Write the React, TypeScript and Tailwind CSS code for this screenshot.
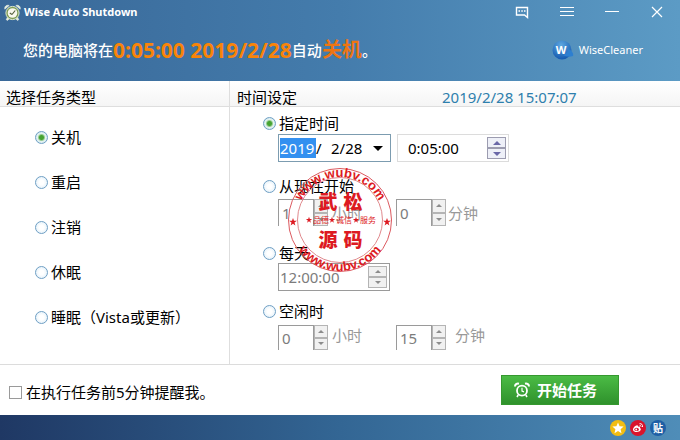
import type { ReactNode } from "react";

const line = "border-[#9a9a9a]";

function Triangle({ up, size }: { up?: boolean; size: number }) {
  return (
    <svg width={size} height={size / 2} viewBox="0 0 8 4" aria-hidden="true" fill="currentColor">
      {up ? <path d="M0 4 4 0l4 4z" /> : <path d="M0 0h8L4 4z" />}
    </svg>
  );
}

function Spinner({ name, active, className }: { name: string; active?: boolean; className: string }) {
  const tone = active
    ? "border-[#9c9cb0] bg-[#eef0f8] text-[#6a68a8]"
    : "border-[#b4b4b4] bg-[#f1f1f1] text-[#8c8c8c]";
  return (
    <span className={`flex shrink-0 flex-col ${className}`}>
      <button type="button" aria-label={`${name} +`} className={`flex flex-1 items-center justify-center border ${tone}`}>
        <Triangle up size={active ? 8 : 6} />
      </button>
      <button type="button" aria-label={`${name} -`} className={`flex flex-1 items-center justify-center border ${tone}`}>
        <Triangle size={active ? 8 : 6} />
      </button>
    </span>
  );
}

function Radio({ group, label, checked }: { group: string; label: string; checked?: boolean }) {
  return (
    <label className="flex h-5 items-center gap-[3px] whitespace-nowrap">
      <input
        type="radio"
        name={group}
        defaultChecked={checked}
        className="size-[13px] shrink-0 appearance-none rounded-full border border-[#6f9fc4] bg-[radial-gradient(circle,#ffffff_30%,#d9ebf7_100%)] checked:bg-[radial-gradient(circle,#46a332_0px,#46a332_2px,#e4f3f0_4px,#d3e8f2_6px)]"
      />
      {label}
    </label>
  );
}

function NumberField({ name, value, unit, unitGap, height }: { name: string; value: string; unit: string; unitGap: string; height: string }) {
  return (
    <div className={`flex text-[#7c7c7c] ${height}`}>
      <input
        aria-label={name}
        defaultValue={value}
        className={`h-full w-9 border border-b-0 ${line} bg-white px-[3px] outline-none`}
      />
      <Spinner name={name} className="h-full w-[14px]" />
      <span className={unitGap}>{unit}</span>
    </div>
  );
}

function Clock() {
  return (
    <svg width="17" height="17" viewBox="0 0 17 17" aria-hidden="true">
      <g fill="#e4edda" stroke="#f4f8ef" strokeWidth=".5">
        <path d="M.8 5.2C0 2.8 2.500 .4 5.200 1.500z" />
        <path d="M16.200 5.200C17 2.800 14.500 .4 11.800 1.500z" />
        <path d="m3.500 13-1.300 2.700 1.500.7L5.500 14.500zM13.500 13l1.300 2.700-1.500.7-1.800-1.900z" />
      </g>
      <circle cx="8.500" cy="9" r="6.600" fill="#7d9b55" stroke="#dfe9cf" />
      <circle cx="8.500" cy="9" r="4.800" fill="#f8f8ee" />
      <path d="M8 10.500 11.200 6.500M8 10.500 5.800 9" fill="none" stroke="#55603d" strokeWidth="1.200" />
    </svg>
  );
}

function AlarmIcon() {
  return (
    <svg width="16" height="16" viewBox="0 0 16 16" fill="none" stroke="#fff" aria-hidden="true">
      <circle cx="8" cy="8.700" r="5" strokeWidth="1.800" />
      <path d="M8 5.800v3.200l2 .9" strokeWidth="1.200" />
      <path d="M1 4.500C1 2.500 2.700 1.200 5 1.700M15 4.500c0-2-1.700-3.300-4-2.800" strokeWidth="2" />
      <path d="m4.200 13-1.200 2M11.800 13l1.200 2" strokeWidth="1.600" />
    </svg>
  );
}

function WindowButton({ name, children }: { name: string; children: ReactNode }) {
  return (
    <button type="button" aria-label={name} className="flex size-5 items-center justify-center text-white">
      <svg width="16" height="16" viewBox="0 0 16 16" fill="none" stroke="currentColor" aria-hidden="true">
        {children}
      </svg>
    </button>
  );
}

function Stamp() {
  const star = "M0-4 1-1.200 3.900-1.200 1.500.6 2.400 3.500 0 1.700-2.400 3.500-1.500.6-3.900-1.200-1-1.200z";
  return (
    <svg
      className="pointer-events-none absolute left-[57px] top-[60px]"
      width="106"
      height="106"
      viewBox="-53 -53 106 106"
      fill="#dd1a22"
      aria-label="www.wubv.com"
    >
      <circle r="51.500" fill="none" stroke="#dc5a60" />
      <circle r="42.500" fill="none" stroke="#e0898d" />
      <path id="stampTop" d="M-43 0A43 43 0 0 1 43 0" fill="none" />
      <path id="stampBottom" d="M-51 0A51 51 0 0 0 51 0" fill="none" />
      <g className="font-['Liberation_Sans',sans-serif] text-[13px] font-bold" textAnchor="middle">
        <text><textPath href="#stampTop" startOffset="50%">www.wubv.com</textPath></text>
        <text><textPath href="#stampBottom" startOffset="50%">www.wubv.com</textPath></text>
      </g>
      <path d={star} transform="translate(-47 2)" />
      <path d={star} transform="translate(47 2)" />
      <g className="font-['Noto_Sans_CJK_SC',sans-serif] font-black" textAnchor="middle">
        <text x="-12" y="-11" className="text-[19px]">武</text>
        <text x="13" y="-11" className="text-[19px]">松</text>
        <text x="-12" y="27" className="text-[19px]">源</text>
        <text x="13" y="27" className="text-[19px]">码</text>
      </g>
      <g className="font-['Noto_Sans_CJK_SC',sans-serif] text-[8px]" textAnchor="middle">
        <text x="-19" y="3">品德</text>
        <text x="4" y="3">诚信</text>
        <text x="28" y="3">服务</text>
      </g>
      <path d={star} transform="translate(-31 0) scale(.8)" />
      <path d={star} transform="translate(-8 0) scale(.8)" />
      <path d={star} transform="translate(16 0) scale(.8)" />
    </svg>
  );
}

const tasks = ["关机", "重启", "注销", "休眠", "睡眠（Vista或更新）"];

export default function App() {
  return (
    <div className="flex min-h-screen w-full flex-col bg-white font-['Noto_Sans','Noto_Sans_CJK_SC',sans-serif] text-[15px] leading-5 text-black">
      <header className="h-[81px] shrink-0 bg-linear-to-r from-[#396898] via-[#447cac] to-[#5c9bc5] text-white">
        <div className="flex h-6 items-center gap-[3px] pl-1 pr-[13px]">
          <Clock />
          <h1 className="flex-1 text-[11px] font-bold">Wise Auto Shutdown</h1>
          <div className="flex gap-[25px]">
            <WindowButton name="反馈">
              <path d="M2.500 3.500h11v10l-3-2.500h-8z" strokeWidth="1.400" />
              <path d="M4.500 7h1.500M7.300 7h1.500M10 7h1.500" strokeWidth="1.500" />
            </WindowButton>
            <WindowButton name="菜单">
              <path d="M1 3.500h14M1 7.500h14M1 11.500h14" />
            </WindowButton>
            <WindowButton name="最小化">
              <path d="M1 7.500h14" />
            </WindowButton>
            <WindowButton name="关闭">
              <path d="m3 3 10 10M13 3 3 13" strokeWidth="1.200" />
            </WindowButton>
          </div>
        </div>
        <div className="flex h-[52px] items-center justify-between pl-[23px] pr-[37px]">
          <p className="flex items-center whitespace-nowrap font-medium">
            您的电脑将在
            <strong className="text-[21px] font-bold text-[#f98409]">0:05:00 2019/2/28</strong>
            自动
            <strong className="text-[20px] font-bold text-[#ee7512]">关机</strong>
            。
          </p>
          <a href="#wisecleaner" className="flex items-center gap-1 text-[11px]">
            <svg width="24" height="24" viewBox="0 0 24 24" aria-hidden="true">
              <defs>
                <radialGradient id="ball" cx=".45" cy=".25" r=".75">
                  <stop offset="0" stopColor="#5fa8e0" />
                  <stop offset="1" stopColor="#1459b0" />
                </radialGradient>
              </defs>
              <circle cx="11" cy="12" r="9.500" fill="url(#ball)" />
              <path d="M17 11c4 1 6 5 5 7-3 1-7 1-10-1 3-1 5-3 5-6z" fill="#2e7fd0" />
              <text x="10" y="16" textAnchor="middle" fill="#fff" className="text-[11px] font-bold">W</text>
            </svg>
            WiseCleaner
          </a>
        </div>
      </header>

      <main className="flex flex-1 border-b border-[#dcdcdc]">
        <section className="flex w-[230px] shrink-0 flex-col border-r border-[#dedede]">
          <h2 className="h-[26px] border-b border-[#dedede] bg-linear-to-b from-white to-[#f5f5f5] pl-[6px] pt-[6px]">选择任务类型</h2>
          <div className="flex flex-col gap-[25px] pl-[35px] pt-5">
            {tasks.map((task, i) => (
              <Radio key={task} group="task" label={task} checked={i === 0} />
            ))}
          </div>
        </section>
        <section className="flex flex-1 flex-col">
          <div className="flex h-[26px] border-b border-[#dedede] bg-linear-to-b from-white to-[#f5f5f5] pl-[7px] pt-[6px]">
            <h2 className="w-[205px]">时间设定</h2>
            <time className="whitespace-nowrap text-[#2e7fad]">2019/2/28 15:07:07</time>
          </div>
          <div className="relative flex flex-col pl-[33px] pt-[6px]">
            <Radio group="time" label="指定时间" checked />
            <div className="ml-[15px] mt-px flex h-7 gap-[6px]">
              <div className="flex w-[113px] items-center border border-[#7c9cb0] pl-px">
                <input aria-label="年" defaultValue="2019" className="h-5 w-9 bg-[#3390f0] text-white outline-none" />
                <span>/</span>
                <input aria-label="月" defaultValue="2" className="w-[18px] text-right outline-none" />
                <span>/</span>
                <input aria-label="日" defaultValue="28" className="w-5 outline-none" />
                <button type="button" aria-label="选择日期" className="flex flex-1 items-center justify-center">
                  <Triangle size={10} />
                </button>
              </div>
              <div className="flex w-[112px] items-center border border-[#dcdcdc] pl-[10px] pr-[2px]">
                <input aria-label="时间" defaultValue="0:05:00" className="min-w-0 flex-1 outline-none" />
                <Spinner name="时间" active className="h-[22px] w-[19px]" />
              </div>
            </div>
            <div className="mt-[14px]">
              <Radio group="time" label="从现在开始" />
            </div>
            <div className="ml-[15px] mt-[3px] flex">
              <div className="w-[118px]">
                <NumberField name="小时后" value="1" unit="小时" unitGap="pl-1 pt-1 text-[#999999]" height="h-[27px]" />
              </div>
              <NumberField name="分钟后" value="0" unit="分钟" unitGap="pl-[2px] pt-1 text-[#999999]" height="h-[27px]" />
            </div>
            <div className="mt-[17px]">
              <Radio group="time" label="每天" />
            </div>
            <div className={`ml-[15px] flex h-7 w-[112px] items-center border ${line} pl-px pr-[2px] text-[#7c7c7c]`}>
              <input aria-label="每天时间" defaultValue="12:00:00" className="min-w-0 flex-1 outline-none" />
              <Spinner name="每天时间" className="h-[22px] w-[19px]" />
            </div>
            <div className="mt-[10px]">
              <Radio group="time" label="空闲时" />
            </div>
            <div className="ml-[15px] mt-1 flex">
              <div className="w-[118px]">
                <NumberField name="空闲小时" value="0" unit="小时" unitGap="pl-1 text-[#999999]" height="h-[25px]" />
              </div>
              <NumberField name="空闲分钟" value="15" unit="分钟" unitGap="pl-[9px] text-[#999999]" height="h-[25px]" />
            </div>
            <Stamp />
          </div>
        </section>
      </main>

      <div className="flex h-[50px] shrink-0 items-center justify-between pl-[9px] pr-[61px]">
        <label className="flex items-center gap-1 pt-1">
          <input type="checkbox" className="size-[13px] appearance-none border border-[#9a9a9a] bg-white" />
          在执行任务前5分钟提醒我。
        </label>
        <button type="button" className="flex h-[30px] w-[118px] items-center gap-[7px] border border-[#35982f] bg-linear-to-b from-[#4bbb45] to-[#2f922c] pl-3 font-bold text-white">
          <AlarmIcon />
          开始任务
        </button>
      </div>

      <footer className="flex h-[25px] shrink-0 items-center justify-end gap-1 bg-linear-to-r from-[#1f3864] via-[#336694] to-[#4f8db8] pr-[14px]">
        <a href="#qzone" aria-label="QQ空间">
          <svg width="16" height="16" viewBox="0 0 16 16" aria-hidden="true">
            <circle cx="8" cy="8" r="8" fill="#f2bd12" />
            <path d="m8 2.500 1.600 3.700 4 .3-3 2.700.9 4L8 11l-3.500 2.200.9-4-3-2.700 4-.3z" fill="#fff" />
          </svg>
        </a>
        <a href="#weibo" aria-label="微博">
          <svg width="16" height="16" viewBox="0 0 16 16" aria-hidden="true">
            <circle cx="8" cy="8" r="8" fill="#d9142c" />
            <path d="M6.500 5.500C8 5 8 6 8 6.700c2-.5 2.300.3 2 1.300 2 .8.500 4-3.300 4S2.500 9.500 3.500 8c.8-1.400 2-2.200 3-2.500z" fill="#fff" />
            <ellipse cx="6.600" cy="9.400" rx="2.300" ry="1.600" fill="#d9142c" />
            <circle cx="6.200" cy="9.500" r=".9" fill="#fff" />
            <path d="M9.500 3.700c2-.4 3.500 1.200 3 3.300M9.700 5.500c1-.2 1.500.4 1.300 1.300" stroke="#fff" fill="none" />
          </svg>
        </a>
        <a href="#tieba" aria-label="贴吧" className="flex size-4 items-center justify-center rounded-full bg-[#1f5fa5] text-[10px] font-bold text-white">
          贴
        </a>
      </footer>
    </div>
  );
}
